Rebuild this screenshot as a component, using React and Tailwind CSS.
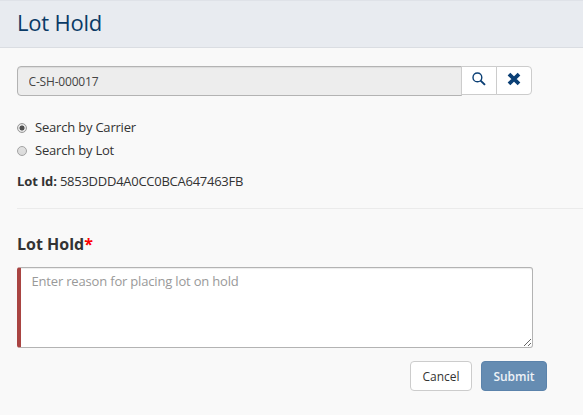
import React, { useState } from "react";

function RadioOption({ label, checked, onChange }) {
  return (
    <label className="flex h-[23px] items-center">
      <input
        type="radio"
        name="searchBy"
        checked={checked}
        onChange={onChange}
        className="mt-[2px] h-[10px] w-[10px] appearance-none rounded-full border border-[#a3a3a3] bg-linear-to-b from-[#e2e2e2] to-[#dadada] checked:border-[#999] checked:bg-radial checked:from-[#505050] checked:from-38% checked:to-[#e4e4e4] checked:to-50%"
      />
      <span className="ml-[8px] tracking-[-0.2px]">{label}</span>
    </label>
  );
}

export default function App() {
  const [mode, setMode] = useState("carrier");
  return (
    <div className="h-[415px] w-[583px] overflow-hidden bg-[#f9f9f9] font-['Open_Sans',sans-serif] text-[13px] leading-[20px] text-[#333]">
      <header className="flex h-12 items-center border-t border-b border-t-[#dfe2e8] border-b-[#dadde2] bg-[#e8ebf0] pb-1 pl-[17px]">
        <h1 className="text-[22px] leading-[30px] tracking-[-0.22px] text-[#0a3a66]">Lot Hold</h1>
      </header>
      <main className="pt-[18px] pl-[17px]">
        <div className="flex items-start">
          <input
            readOnly
            value="C-SH-000017"
            className="h-[30px] w-[445px] rounded-l-[4px] border border-[#b3b3b3] bg-[#ededed] pl-[10.5px] text-[12px] tracking-[-0.18px] text-[#444] shadow-[inset_0_1px_1px_rgba(0,0,0,0.075)] outline-none"
          />
          <button className="-ml-px flex h-[29px] w-9 items-center justify-center border border-[#ccc] bg-white text-[#0a3f75]">
            <svg width="14" height="14" viewBox="0 0 14 14" className="mb-[3px]" fill="none" stroke="currentColor">
              <circle cx="5.4" cy="5.4" r="4.4" strokeWidth="1.4" />
              <path d="M8.6 8.6 13 12.9" strokeWidth="2" />
            </svg>
          </button>
          <button className="-ml-px flex h-[29px] w-9 items-center justify-center rounded-r-[4px] border border-[#ccc] bg-white text-[#0a3f75]">
            <svg width="14" height="14" viewBox="0 0 14 14" className="mb-[3px]" fill="none" stroke="currentColor" strokeWidth="3.8">
              <path d="M2 2.1 12 11.9M12 2.1 2 11.9" />
            </svg>
          </button>
        </div>
        <div className="mt-[19px]">
          <RadioOption label="Search by Carrier" checked={mode === "carrier"} onChange={() => setMode("carrier")} />
          <RadioOption label="Search by Lot" checked={mode === "lot"} onChange={() => setMode("lot")} />
        </div>
        <p className="mt-[10px] tracking-[-0.26px]">
          <span className="font-bold tracking-[-0.12px]">Lot Id:</span> 5853DDD4A0CC0BCA647463FB
        </p>
        <hr className="mt-[17px] border-[#ebebeb]" />
        <h2 className="mt-6 text-[16px] leading-[22px] font-bold">
          Lot Hold<span className="text-[#ff0000]">*</span>
        </h2>
        <textarea
          placeholder="Enter reason for placing lot on hold"
          className="mt-3 block h-[81px] w-[516px] rounded-[3px] border border-l-4 border-[#b3b3b3] border-l-[#a94442] bg-white px-[10.5px] py-[3px] tracking-[-0.18px] shadow-[inset_0_1px_1px_rgba(0,0,0,0.075)] outline-none placeholder:text-[#999]"
        />
        <div className="mt-[13px] flex w-[530px] justify-end gap-[9px] text-[12px]">
          <button className="h-[30px] w-[62px] rounded-[4px] border border-[#ccc] bg-white pt-px">Cancel</button>
          <button className="h-[30px] w-[66px] rounded-[4px] border border-[#5b83ab] bg-[#658cb2] pt-px font-semibold text-[#edf2f7]">Submit</button>
        </div>
      </main>
    </div>
  );
}
